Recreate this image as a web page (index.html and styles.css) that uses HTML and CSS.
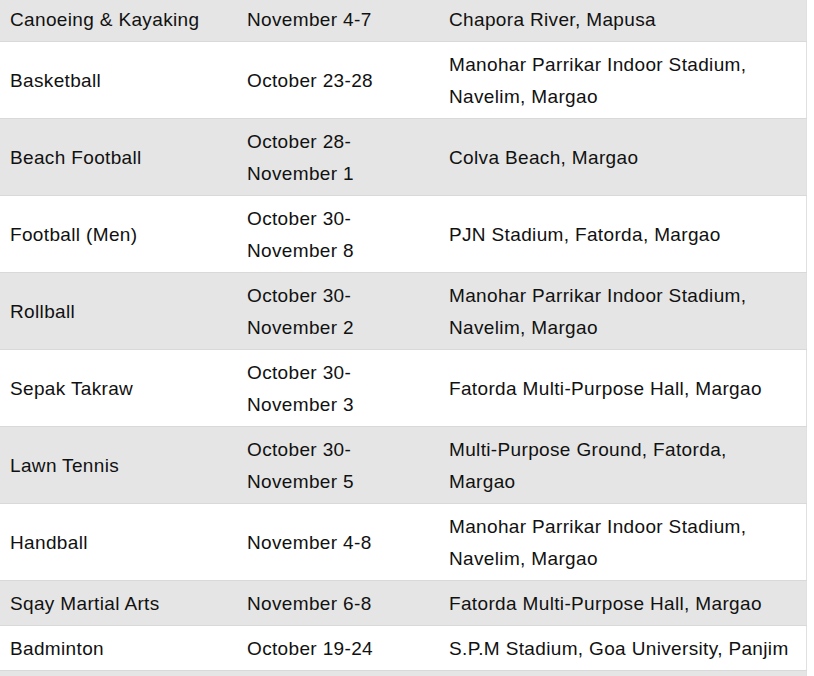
FILE: index.html
```html
<!DOCTYPE html>
<html>
<head>
<meta charset="utf-8">
<link rel="stylesheet" href="styles.css">
</head>
<body>
<table class="schedule">
<colgroup><col class="c1"><col class="c2"><col class="c3"></colgroup>
<tbody>
<tr class="alt"><td>Canoeing &amp; Kayaking</td><td>November 4-7</td><td>Chapora River, Mapusa</td></tr>
<tr><td>Basketball</td><td>October 23-28</td><td>Manohar Parrikar Indoor Stadium, Navelim, Margao</td></tr>
<tr class="alt"><td>Beach Football</td><td>October 28-November 1</td><td>Colva Beach, Margao</td></tr>
<tr><td>Football (Men)</td><td>October 30-November 8</td><td>PJN Stadium, Fatorda, Margao</td></tr>
<tr class="alt"><td>Rollball</td><td>October 30-November 2</td><td>Manohar Parrikar Indoor Stadium, Navelim, Margao</td></tr>
<tr><td>Sepak Takraw</td><td>October 30-November 3</td><td>Fatorda Multi-Purpose Hall, Margao</td></tr>
<tr class="alt"><td>Lawn Tennis</td><td>October 30-November 5</td><td>Multi-Purpose Ground, Fatorda, Margao</td></tr>
<tr><td>Handball</td><td>November 4-8</td><td>Manohar Parrikar Indoor Stadium, Navelim, Margao</td></tr>
<tr class="alt"><td>Sqay Martial Arts</td><td>November 6-8</td><td>Fatorda Multi-Purpose Hall, Margao</td></tr>
<tr><td>Badminton</td><td>October 19-24</td><td>S.P.M Stadium, Goa University, Panjim</td></tr>
<tr class="alt"><td>&nbsp;</td><td>&nbsp;</td><td>&nbsp;</td></tr>
</tbody>
</table>
</body>
</html>
```
FILE: styles.css
```css
html, body {
  margin: 0;
  padding: 0;
  background: #fff;
  overflow: hidden;
}
.schedule {
  margin-top: -3px;
  width: 806px;
  border-collapse: collapse;
  table-layout: fixed;
  font-family: "Liberation Sans", Arial, sans-serif;
  font-size: 19px;
  letter-spacing: 0.35px;
  line-height: 32px;
  color: #111;
  border-right: 1px solid #e0e0e0;
}
.c1 { width: 237px; }
.c2 { width: 202px; }
.c3 { width: 367px; }
.schedule td {
  padding: 7px 8px 5px 10px;
  vertical-align: middle;
  border-bottom: 1px solid #d9d9d9;
}
.schedule td:last-child {
  padding-right: 14px;
}
.schedule tr.alt td {
  background: #e5e5e5;
}
```
